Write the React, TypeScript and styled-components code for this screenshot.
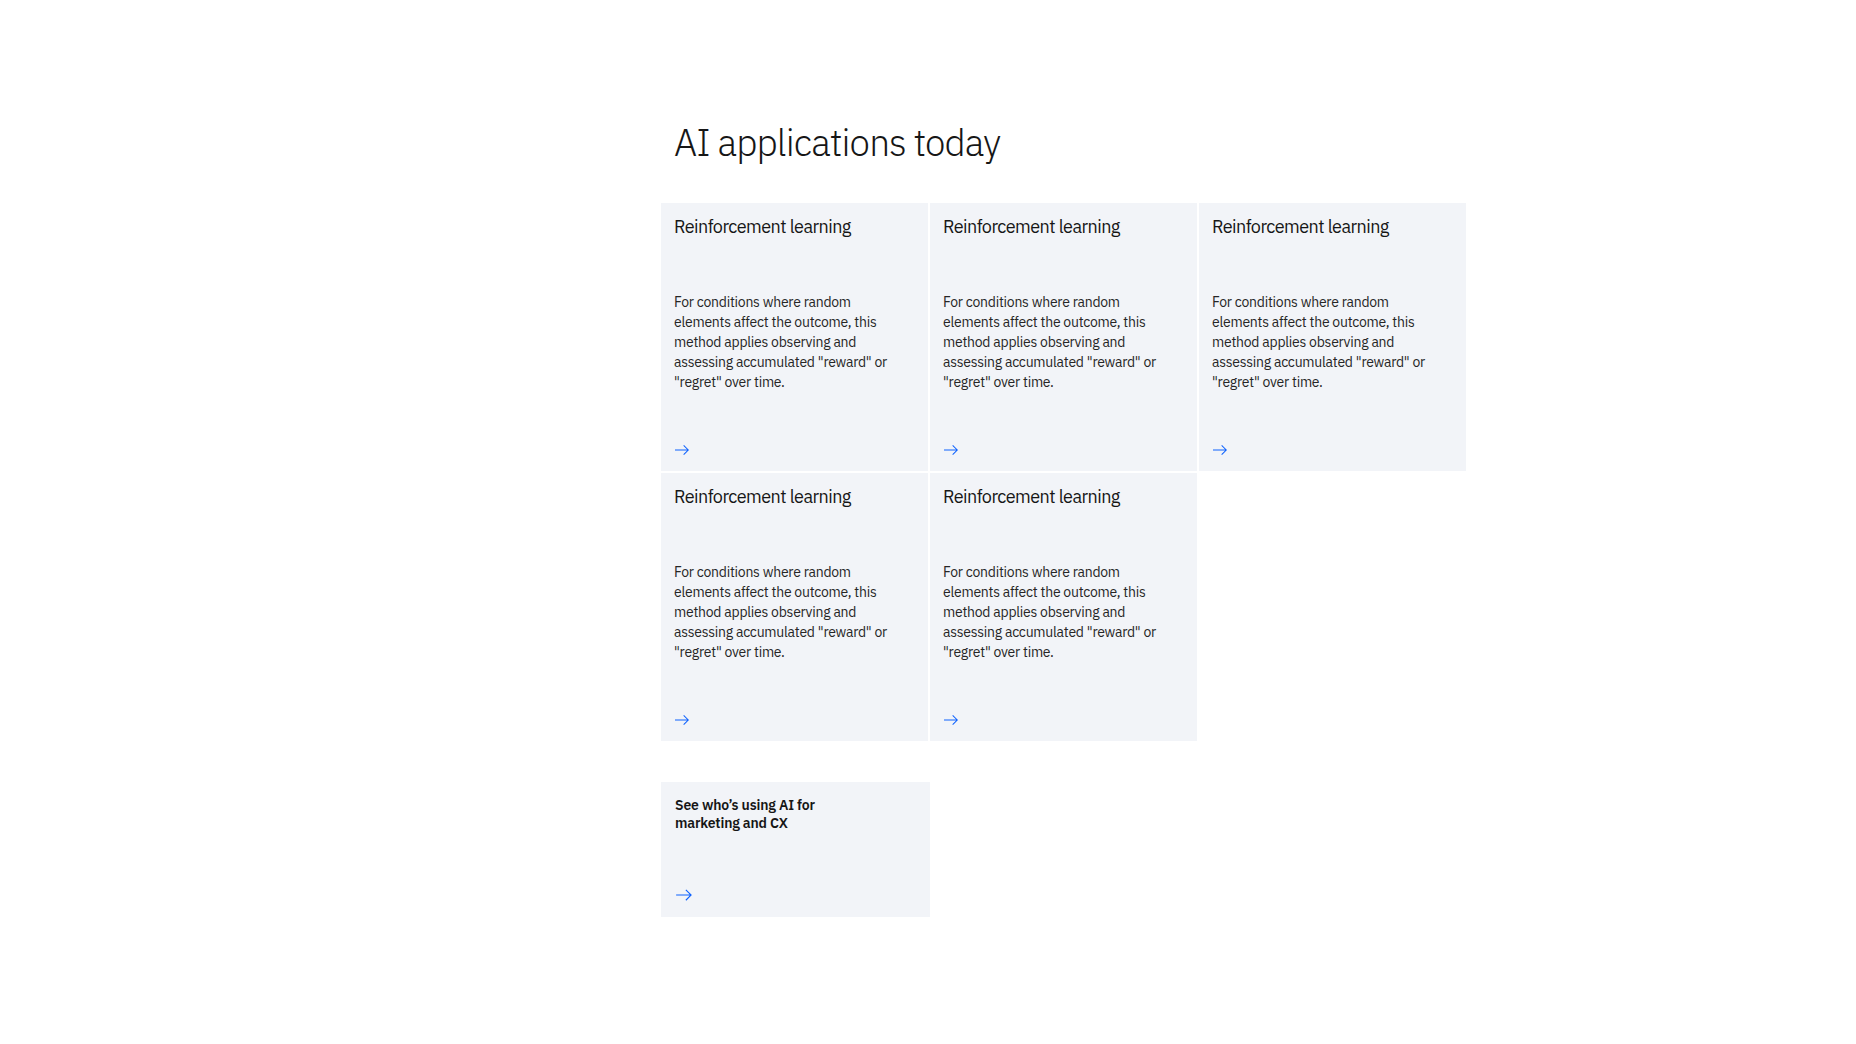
import React from "react";
import styled, { createGlobalStyle } from "styled-components";

type CardType = {
  id: number;
  title: string;
  text: string;
};

const cards: CardType[] = [1, 2, 3, 4, 5].map((id) => ({
  id,
  title: "Reinforcement learning",
  text: 'For conditions where random elements affect the outcome, this method applies observing and assessing accumulated "reward" or "regret" over time.',
}));

const ArrowIcon: React.FC<{ size: number }> = ({ size }) => (
  <Arrow width={size} height={size} viewBox="0 0 16 16" aria-hidden="true">
    <path d="M9.3 3.7L13.1 7.5 1 7.5 1 8.5 13.1 8.5 9.3 12.3 10 13 15 8 10 3z" />
  </Arrow>
);

const App: React.FC = () => {
  return (
    <>
      <GlobalStyle />
      <Page>
        <Heading>AI applications today</Heading>
        <Grid>
          {cards.map((card) => (
            <Card key={card.id} href="#">
              <CardTitle>{card.title}</CardTitle>
              <CardText>{card.text}</CardText>
              <CardFooter>
                <ArrowIcon size={16} />
              </CardFooter>
            </Card>
          ))}
        </Grid>
        <CtaCard href="#">
          <CtaText>See who’s using AI for marketing and CX</CtaText>
          <CardFooter>
            <ArrowIcon size={18} />
          </CardFooter>
        </CtaCard>
      </Page>
    </>
  );
};

const GlobalStyle = createGlobalStyle`
  body {
    margin: 0;
    background-color: #ffffff;
    font-family: "IBM Plex Sans", Roboto, "Helvetica Neue", Arial, sans-serif;
    color: #161616;
  }
`;

const Page = styled.main`
  display: flex;
  flex-direction: column;
  align-items: flex-start;
  padding: 118px 0 120px 661px;
`;

const Heading = styled.h2`
  margin: 0 0 37px;
  padding-left: 13px;
  font-size: 37px;
  line-height: 48px;
  font-weight: 300;
  letter-spacing: -0.9px;
  color: #161616;
`;

const Grid = styled.div`
  display: grid;
  grid-template-columns: repeat(3, 267px);
  grid-auto-rows: 268px;
  gap: 2px;
`;

const Card = styled.a`
  display: flex;
  flex-direction: column;
  padding: 12px 13px 13px;
  background-color: #f2f4f8;
  text-decoration: none;
  color: #161616;
  &:hover {
    background-color: #e8e8e8;
  }
`;

const CardTitle = styled.h3`
  margin: 0;
  font-size: 18px;
  line-height: 24px;
  font-weight: 400;
  letter-spacing: -0.55px;
  color: #161616;
`;

const CardText = styled.p`
  margin: 53px 0 0;
  max-width: 224px;
  font-size: 14px;
  line-height: 20px;
  letter-spacing: -0.25px;
  color: #262626;
`;

const CardFooter = styled.div`
  display: flex;
  margin-top: auto;
`;

const Arrow = styled.svg`
  fill: #0f62fe;
  display: block;
`;

const CtaCard = styled.a`
  display: flex;
  flex-direction: column;
  width: 269px;
  height: 135px;
  box-sizing: border-box;
  margin-top: 41px;
  padding: 14px 14px 13px 14px;
  background-color: #f2f4f8;
  text-decoration: none;
  color: #161616;
`;

const CtaText = styled.p`
  margin: 0;
  max-width: 180px;
  font-size: 14px;
  line-height: 18px;
  font-weight: 600;
  letter-spacing: -0.15px;
  color: #161616;
`;

export default App;
